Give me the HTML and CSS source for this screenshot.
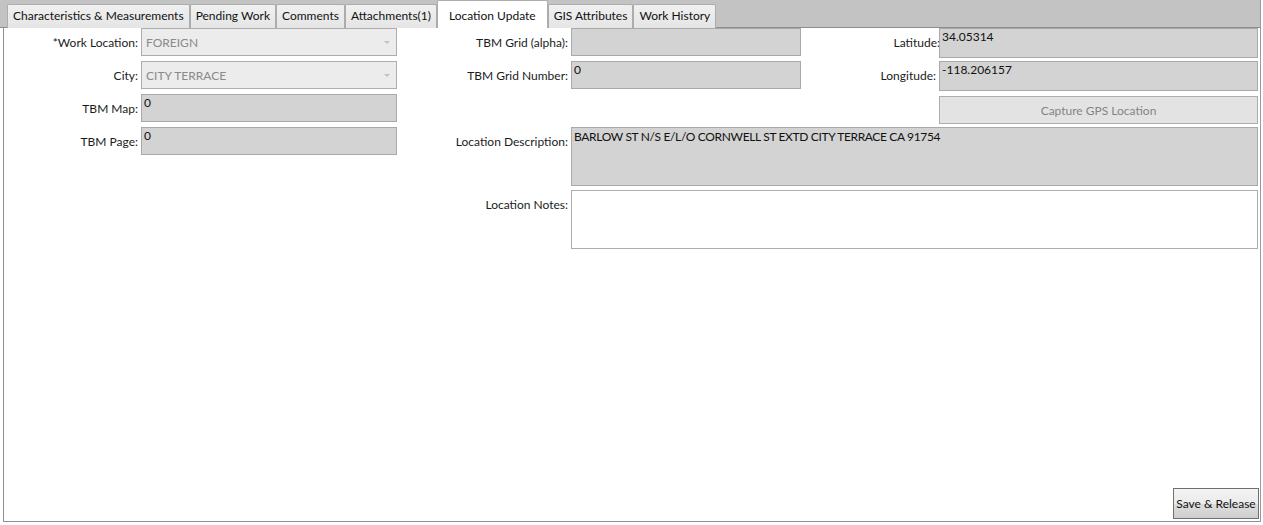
FILE: index.html
```html
<!DOCTYPE html>
<html>
<head>
<meta charset="utf-8">
<link rel="stylesheet" href="styles.css">
</head>
<body>
<div class="window">
  <div class="tabstrip">
    <div class="tab">Characteristics &amp; Measurements</div>
    <div class="tab">Pending Work</div>
    <div class="tab">Comments</div>
    <div class="tab">Attachments(1)</div>
    <div class="tab selected">Location Update</div>
    <div class="tab">GIS Attributes</div>
    <div class="tab">Work History</div>
  </div>
  <div class="panel">
    <div class="form">
      <div class="lbl r1 c1">*Work Location:</div>
      <div class="combo r1 c2"><span>FOREIGN</span><span class="arrow"></span></div>
      <div class="lbl r1 c3">TBM Grid (alpha):</div>
      <div class="box r1 c4"></div>
      <div class="lbl r1 c5 tight">Latitude:</div>
      <div class="box tall r1 c6">34.05314</div>

      <div class="lbl r2 c1">City:</div>
      <div class="combo r2 c2"><span>CITY TERRACE</span><span class="arrow"></span></div>
      <div class="lbl r2 c3">TBM Grid Number:</div>
      <div class="box r2 c4">0</div>
      <div class="lbl r2 c5">Longitude:</div>
      <div class="box tall r2 c6">-118.206157</div>

      <div class="lbl r3 c1">TBM Map:</div>
      <div class="box r3 c2">0</div>
      <div class="btn-disabled r3 c6">Capture GPS Location</div>

      <div class="lbl r4 c1">TBM Page:</div>
      <div class="box r4 c2">0</div>
      <div class="lbl r4 c3">Location Description:</div>
      <div class="box area r4 span">BARLOW ST N/S E/L/O CORNWELL ST EXTD CITY TERRACE CA 91754</div>

      <div class="lbl r5 c3">Location Notes:</div>
      <div class="notes r5 span"></div>
    </div>
    <div class="footer">
      <div class="btn">Save &amp; Release</div>
    </div>
  </div>
</div>
</body>
</html>
```
FILE: styles.css
```css
* { box-sizing: border-box; }
html, body { margin: 0; padding: 0; background: #ffffff; }
body {
  font-family: "Lato", "Noto Sans", "Liberation Sans", sans-serif;
  font-size: 12px;
  color: #1b1b1b;
  width: 1263px;
  height: 525px;
  overflow: hidden;
}
.window {
  width: 1261px;
  height: 522px;
  border-right: 1px solid #9a9a9a;
  display: flex;
  flex-direction: column;
}
.tabstrip {
  height: 28px;
  background: #c3c3c3;
  border-bottom: 1px solid #8e8e8e;
  display: flex;
  align-items: flex-end;
  padding-left: 7px;
}
.tab {
  height: 24px;
  margin-bottom: -1px;
  padding: 0 5px 2px 5px;
  border: 1px solid #acacac;
  border-bottom: none;
  border-radius: 2px 2px 0 0;
  background: linear-gradient(#f0f0f0, #e5e5e5);
  display: flex;
  align-items: center;
  white-space: nowrap;
  color: #111;
}
.tab.selected {
  height: 28px;
  background: #ffffff;
  padding: 1px 11px 0 11px;
  margin-bottom: -1px;
  position: relative;
}
.panel {
  flex: 1;
  margin-left: 3px;
  border-left: 1px solid #8e8e8e;
  border-bottom: 1px solid #8e8e8e;
  display: flex;
  flex-direction: column;
  justify-content: space-between;
}
.form {
  display: grid;
  grid-template-columns: 137px 256px 174px 230px 138px 319px;
  grid-template-rows: 30px 30px 30px 59px 59px;
  row-gap: 3px;
}
.r1 { grid-row: 1; }
.r2 { grid-row: 2; }
.r3 { grid-row: 3; }
.r4 { grid-row: 4; }
.r5 { grid-row: 5; margin-top: 1px; }
.c1 { grid-column: 1; }
.c2 { grid-column: 2; }
.c3 { grid-column: 3; }
.c4 { grid-column: 4; }
.c5 { grid-column: 5; }
.c6 { grid-column: 6; }
.span { grid-column: 4 / 7; }
.lbl {
  height: 28px;
  display: flex;
  align-items: center;
  justify-content: flex-end;
  padding-right: 3px;
  white-space: nowrap;
}
.lbl.tight { padding-right: 0; margin-right: -1px; }
.combo {
  height: 28px;
  border: 1px solid #adadad;
  background: #ececec;
  color: #8a8a8a;
  display: flex;
  align-items: center;
  justify-content: space-between;
  padding: 0 6px 0 4px;
}
.arrow {
  width: 0;
  height: 0;
  border-left: 3px solid transparent;
  border-right: 3px solid transparent;
  border-top: 3px solid #c2c2c2;
  margin-top: 1px;
}
.box {
  height: 28px;
  border: 1px solid #a9a9a9;
  background: #d3d3d3;
  padding: 0 2px;
  line-height: 16px;
  color: #111;
}
.box.tall { height: 30px; }
.box.area { height: 59px; padding-top: 1px; letter-spacing: -0.35px; }
.notes {
  height: 59px;
  border: 1px solid #abadb3;
  background: #ffffff;
}
.btn-disabled {
  margin-top: 2px;
  height: 28px;
  border: 1px solid #adadad;
  background: #e3e3e3;
  color: #838383;
  display: flex;
  align-items: center;
  justify-content: center;
}
.footer {
  display: flex;
  justify-content: flex-end;
  padding: 0 1px 2px 0;
}
.btn {
  width: 86px;
  height: 31px;
  border: 1px solid #707070;
  background: linear-gradient(#f3f3f3 0%, #ebebeb 50%, #dddddd 51%, #cfcfcf 100%);
  display: flex;
  align-items: center;
  justify-content: center;
  color: #111;
  white-space: nowrap;
}
```
